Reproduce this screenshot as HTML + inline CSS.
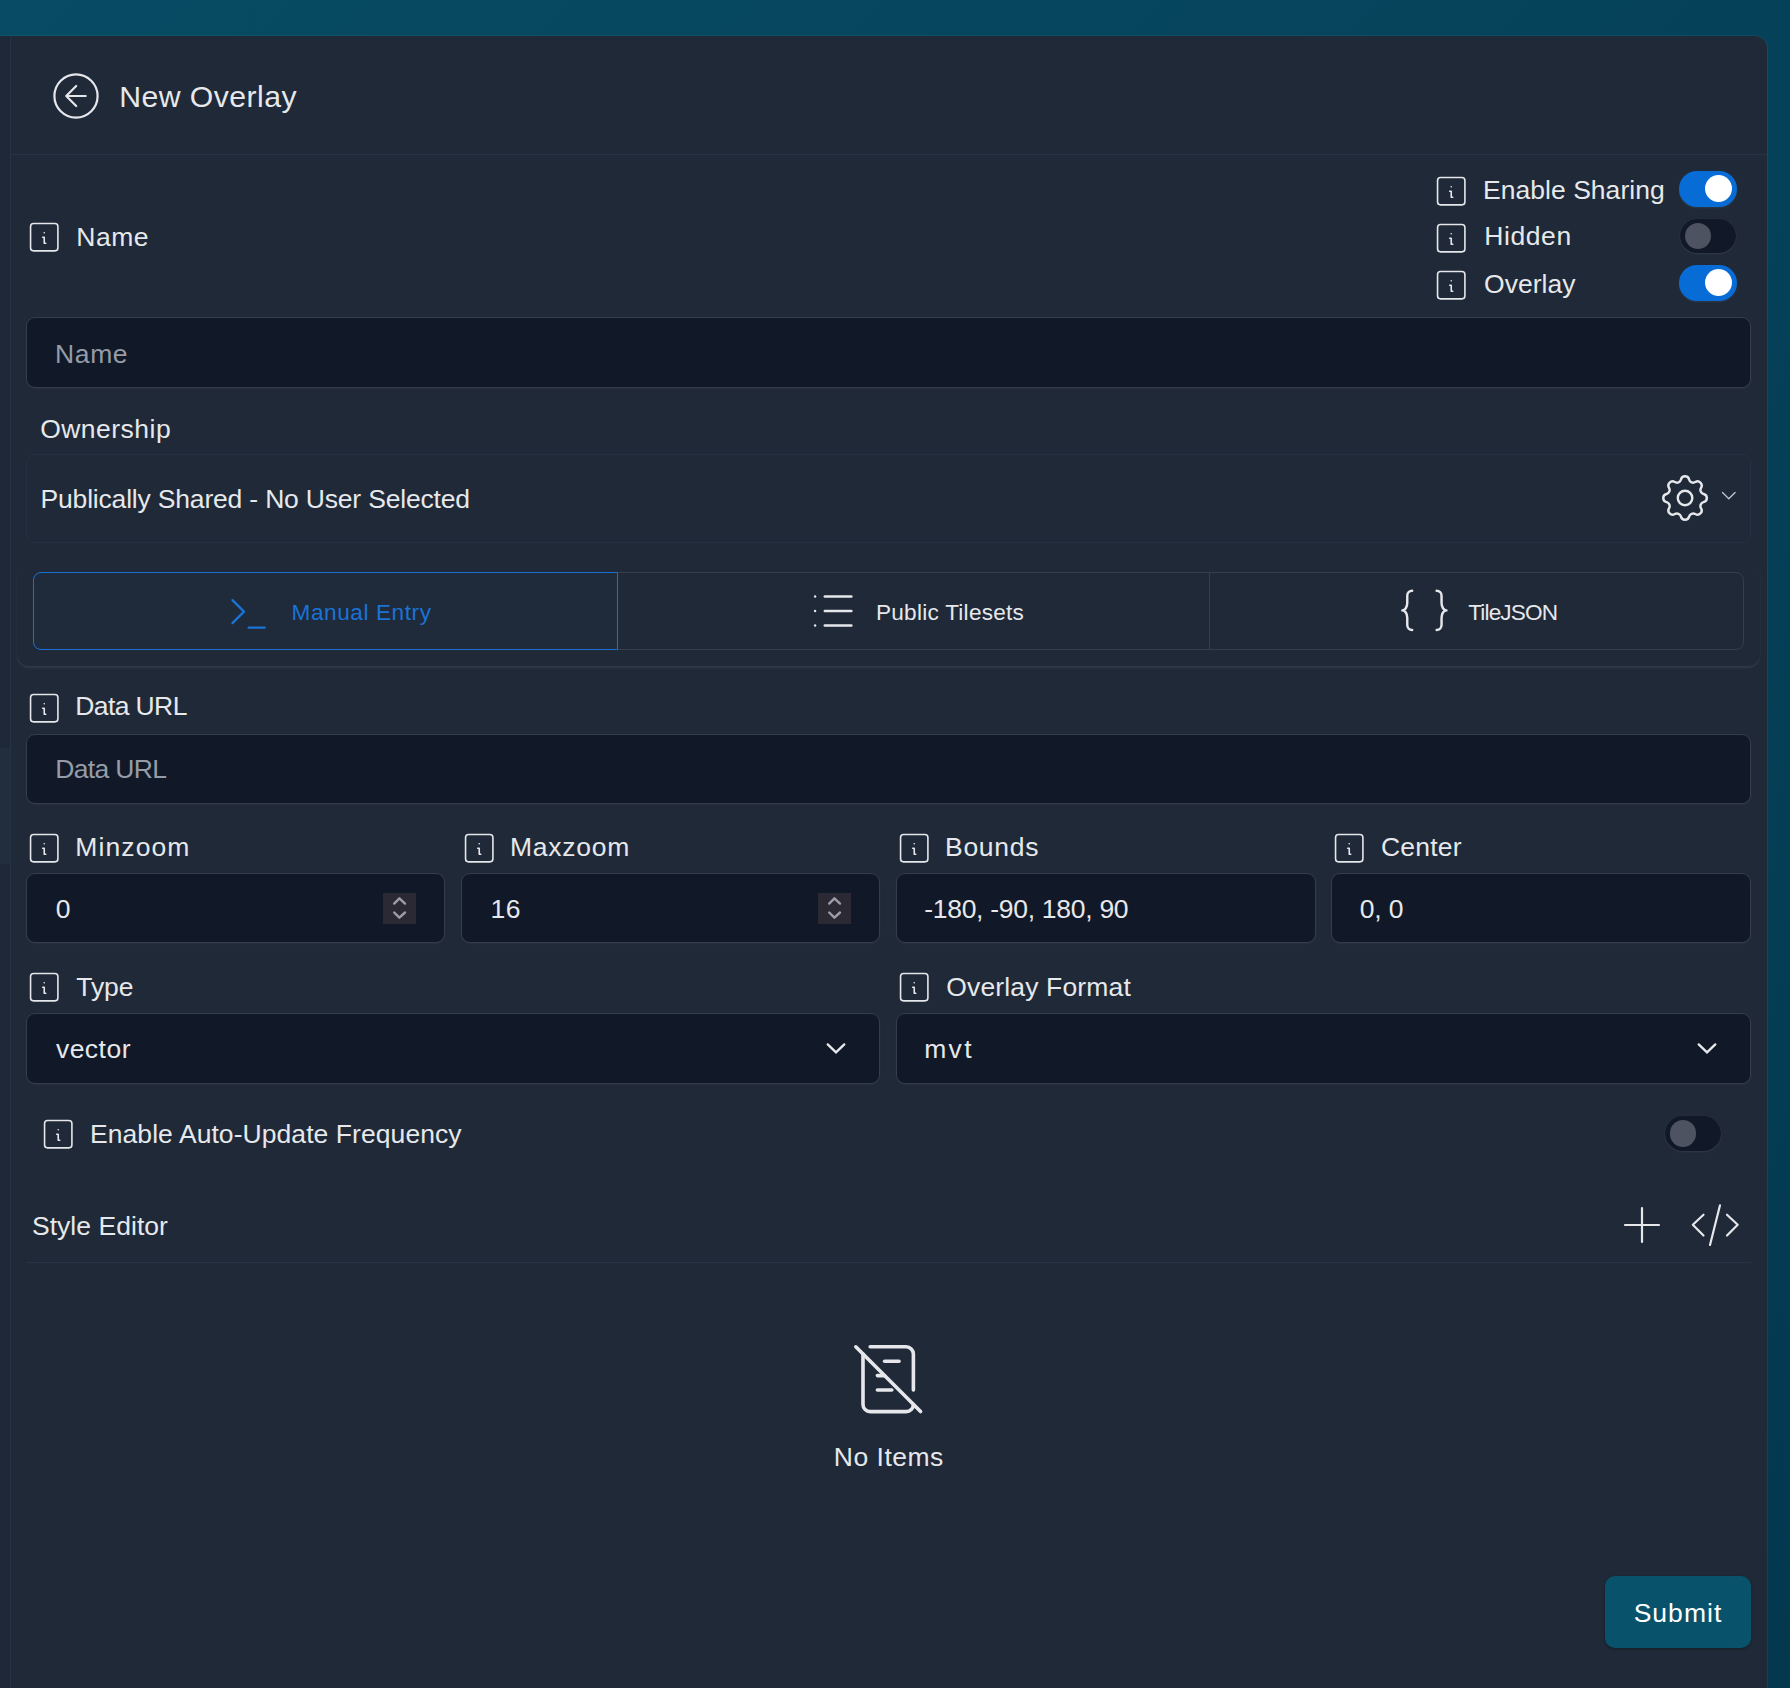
<!DOCTYPE html>
<html><head><meta charset="utf-8">
<style>
html,body{margin:0;padding:0;width:1790px;height:1688px;overflow:hidden;}
body{background:linear-gradient(to bottom right,#074c64,#03384f);position:relative;font-family:"Liberation Sans",sans-serif;}
.t{position:absolute;white-space:pre;}
.b{position:absolute;box-sizing:border-box;}
.i{position:absolute;overflow:visible;}

</style></head><body>
<div class="b" style="left:-20px;top:36px;width:1787px;height:1684px;background:#1f2937;border-radius:12px;box-shadow:0 0 0 0.6px rgba(200,210,225,0.10), 0 1px 4px rgba(200,210,225,0.05);"></div>
<div class="b" style="left:0px;top:36px;width:10px;height:1652px;background:#1f2836;"></div>
<div class="b" style="left:0px;top:748px;width:10px;height:116px;background:#222e3d;"></div>
<div class="b" style="left:10px;top:36px;width:1px;height:1652px;background:#243345;"></div>
<svg class="i" style="left:0;top:0;width:200px;height:200px" viewBox="0 0 200 200" fill="none" stroke="#e5e7eb" stroke-width="2.2" stroke-linecap="round" stroke-linejoin="round"><circle cx="76" cy="96" r="21.6"/><path d="M66.2 96h19.5M66.2 96l10 -10M66.2 96l10 10"/></svg>
<div class="t" id="t_title" style="left:119.29px;top:82.04px;font-size:30.2px;line-height:30.2px;color:#e6e8eb;letter-spacing:0.449px;font-weight:400;">New Overlay</div>
<div class="b" style="left:11px;top:154px;width:1756px;height:1px;background:#263344;"></div>
<svg class="i" style="left:25.96px;top:219.16px;width:36.48px;height:36.48px;" viewBox="0 0 24 24" fill="none" stroke="#e5e7eb" stroke-width="1.05" stroke-linecap="round" stroke-linejoin="round"><path d="M12 9h.01"/><path d="M3 5a2 2 0 0 1 2 -2h14a2 2 0 0 1 2 2v14a2 2 0 0 1 -2 2h-14a2 2 0 0 1 -2 -2v-14z"/><path d="M11 12h1v4h1"/></svg>
<div class="t" id="t_name_lbl" style="left:76.30px;top:223.57px;font-size:26.5px;line-height:26.5px;color:#e6e8eb;letter-spacing:0.498px;font-weight:400;">Name</div>
<svg class="i" style="left:1433.16px;top:173.16px;width:36.48px;height:36.48px;" viewBox="0 0 24 24" fill="none" stroke="#e5e7eb" stroke-width="1.05" stroke-linecap="round" stroke-linejoin="round"><path d="M12 9h.01"/><path d="M3 5a2 2 0 0 1 2 -2h14a2 2 0 0 1 2 2v14a2 2 0 0 1 -2 2h-14a2 2 0 0 1 -2 -2v-14z"/><path d="M11 12h1v4h1"/></svg>
<div class="t" id="t_share" style="left:1482.97px;top:176.57px;font-size:26.5px;line-height:26.5px;color:#e6e8eb;letter-spacing:0.040px;font-weight:400;">Enable Sharing</div>
<div class="b" style="left:1679px;top:171px;width:58px;height:36px;background:#086cd7;border-radius:18px;box-shadow:0 1px 2px rgba(200,210,225,0.10);"></div>
<div class="b" style="left:1705px;top:175.4px;width:27px;height:27.0px;background:#ffffff;border-radius:50%;"></div>
<svg class="i" style="left:1433.16px;top:220.16px;width:36.48px;height:36.48px;" viewBox="0 0 24 24" fill="none" stroke="#e5e7eb" stroke-width="1.05" stroke-linecap="round" stroke-linejoin="round"><path d="M12 9h.01"/><path d="M3 5a2 2 0 0 1 2 -2h14a2 2 0 0 1 2 2v14a2 2 0 0 1 -2 2h-14a2 2 0 0 1 -2 -2v-14z"/><path d="M11 12h1v4h1"/></svg>
<div class="t" id="t_hidden" style="left:1484.30px;top:223.37px;font-size:26.5px;line-height:26.5px;color:#e6e8eb;letter-spacing:0.570px;font-weight:400;">Hidden</div>
<div class="b" style="left:1680px;top:219px;width:56px;height:34px;background:#111827;border-radius:18px;box-shadow:0 0 1px rgba(200,210,225,0.15), 0 1px 2px rgba(200,210,225,0.10);"></div>
<div class="b" style="left:1685px;top:223px;width:26px;height:26px;background:#4d5360;border-radius:50%;"></div>
<svg class="i" style="left:1433.16px;top:267.16px;width:36.48px;height:36.48px;" viewBox="0 0 24 24" fill="none" stroke="#e5e7eb" stroke-width="1.05" stroke-linecap="round" stroke-linejoin="round"><path d="M12 9h.01"/><path d="M3 5a2 2 0 0 1 2 -2h14a2 2 0 0 1 2 2v14a2 2 0 0 1 -2 2h-14a2 2 0 0 1 -2 -2v-14z"/><path d="M11 12h1v4h1"/></svg>
<div class="t" id="t_overlay" style="left:1484.06px;top:270.77px;font-size:26.5px;line-height:26.5px;color:#e6e8eb;letter-spacing:0.033px;font-weight:400;">Overlay</div>
<div class="b" style="left:1679px;top:265px;width:58px;height:36px;background:#086cd7;border-radius:18px;box-shadow:0 1px 2px rgba(200,210,225,0.10);"></div>
<div class="b" style="left:1705px;top:269.4px;width:27px;height:27.0px;background:#ffffff;border-radius:50%;"></div>
<div class="b" style="left:26px;top:317px;width:1725px;height:70.5px;background:#111827;border:1px solid #343d4b;border-radius:9px;box-shadow:0 1px 2px rgba(130,140,160,0.10);"></div>
<div class="t" id="t_name_ph" style="left:54.97px;top:340.57px;font-size:26.5px;line-height:26.5px;color:#959ca8;letter-spacing:0.644px;font-weight:400;">Name</div>
<div class="t" id="t_own" style="left:40.14px;top:415.77px;font-size:26.5px;line-height:26.5px;color:#e6e8eb;letter-spacing:0.484px;font-weight:400;">Ownership</div>
<div class="b" style="left:26px;top:454px;width:1725px;height:89px;border:1px solid #243142;border-radius:9px;"></div>
<div class="t" id="t_pub" style="left:40.57px;top:485.67px;font-size:26.5px;line-height:26.5px;color:#e6e8eb;letter-spacing:-0.187px;font-weight:400;">Publically Shared - No User Selected</div>
<svg class="i" style="left:1655.96px;top:468.96px;width:58.08px;height:58.08px;" viewBox="0 0 24 24" fill="none" stroke="#e5e7eb" stroke-width="1" stroke-linecap="round" stroke-linejoin="round"><path d="M10.325 4.317c.426 -1.756 2.924 -1.756 3.35 0a1.724 1.724 0 0 0 2.573 1.066c1.543 -.94 3.31 .826 2.37 2.37a1.724 1.724 0 0 0 1.065 2.572c1.756 .426 1.756 2.924 0 3.35a1.724 1.724 0 0 0 -1.066 2.573c.94 1.543 -.826 3.31 -2.37 2.37a1.724 1.724 0 0 0 -2.572 1.065c-.426 1.756 -2.924 1.756 -3.35 0a1.724 1.724 0 0 0 -2.573 -1.066c-1.543 .94 -3.31 -.826 -2.37 -2.37a1.724 1.724 0 0 0 -1.065 -2.572c-1.756 -.426 -1.756 -2.924 0 -3.35a1.724 1.724 0 0 0 1.066 -2.573c-.94 -1.543 .826 -3.31 2.37 -2.37c1 .608 2.296 .07 2.572 -1.065z"/><path d="M9 12a3 3 0 1 0 6 0a3 3 0 0 0 -6 0"/></svg>
<svg class="i" style="left:1715px;top:485px;width:30px;height:20px" viewBox="0 0 30 20" fill="none" stroke="#c3c7cd" stroke-width="1.3" stroke-linecap="round" stroke-linejoin="round"><path d="M7.5 7.5l6.3 6.3l6.3 -6.3"/></svg>
<div class="b" style="left:17px;top:563px;width:1743px;height:103px;border-radius:12px;box-shadow:0 1.5px 2px rgba(200,210,225,0.10);"></div>
<div class="b" style="left:33px;top:572px;width:1711px;height:78px;border:1px solid #343e4d;border-radius:8px;"></div>
<div class="b" style="left:617px;top:572px;width:1px;height:78px;background:#343e4d;"></div>
<div class="b" style="left:1209px;top:572px;width:1px;height:78px;background:#343e4d;"></div>
<div class="b" style="left:33px;top:572px;width:585px;height:78px;border:1.2px solid #1b70d3;border-radius:8px 0 0 8px;background:#1f2a3a;"></div>
<svg class="i" style="left:221.00px;top:583.50px;width:55.20px;height:55.20px;" viewBox="0 0 24 24" fill="none" stroke="#1a73d6" stroke-width="1" stroke-linecap="round" stroke-linejoin="round"><path d="M5 7l5 5l-5 5"/><path d="M12 19l7 0"/></svg>
<div class="t" id="t_tab1" style="left:291.55px;top:601.87px;font-size:22.6px;line-height:22.6px;color:#1a73d6;letter-spacing:0.577px;font-weight:400;">Manual Entry</div>
<svg class="i" style="left:803.20px;top:582.10px;width:58.08px;height:58.08px;" viewBox="0 0 24 24" fill="none" stroke="#e5e7eb" stroke-width="1" stroke-linecap="round" stroke-linejoin="round"><path d="M9 6l11 0"/><path d="M9 12l11 0"/><path d="M9 18l11 0"/><path d="M5 6l0 .01"/><path d="M5 12l0 .01"/><path d="M5 18l0 .01"/></svg>
<div class="t" id="t_tab2" style="left:875.95px;top:602.07px;font-size:22.6px;line-height:22.6px;color:#e6e8eb;letter-spacing:0.255px;font-weight:400;">Public Tilesets</div>
<svg class="i" style="left:1394.90px;top:581.00px;width:58.80px;height:58.80px;" viewBox="0 0 24 24" fill="none" stroke="#e5e7eb" stroke-width="1" stroke-linecap="round" stroke-linejoin="round"><path d="M7 4a2 2 0 0 0 -2 2v3a2 3 0 0 1 -2 3a2 3 0 0 1 2 3v3a2 2 0 0 0 2 2"/><path d="M17 4a2 2 0 0 1 2 2v3a2 3 0 0 0 2 3a2 3 0 0 0 -2 3v3a2 2 0 0 1 -2 2"/></svg>
<div class="t" id="t_tab3" style="left:1468.27px;top:601.87px;font-size:22.6px;line-height:22.6px;color:#e6e8eb;letter-spacing:-0.866px;font-weight:400;">TileJSON</div>
<svg class="i" style="left:25.96px;top:690.16px;width:36.48px;height:36.48px;" viewBox="0 0 24 24" fill="none" stroke="#e5e7eb" stroke-width="1.05" stroke-linecap="round" stroke-linejoin="round"><path d="M12 9h.01"/><path d="M3 5a2 2 0 0 1 2 -2h14a2 2 0 0 1 2 2v14a2 2 0 0 1 -2 2h-14a2 2 0 0 1 -2 -2v-14z"/><path d="M11 12h1v4h1"/></svg>
<div class="t" id="t_url_lbl" style="left:75.29px;top:693.37px;font-size:26.5px;line-height:26.5px;color:#e6e8eb;letter-spacing:-0.608px;font-weight:400;">Data URL</div>
<div class="b" style="left:26px;top:734px;width:1725px;height:70px;background:#111827;border:1px solid #343d4b;border-radius:9px;box-shadow:0 1px 2px rgba(130,140,160,0.10);"></div>
<div class="t" id="t_url_ph" style="left:55.17px;top:756.37px;font-size:26.5px;line-height:26.5px;color:#959ca8;letter-spacing:-0.654px;font-weight:400;">Data URL</div>
<svg class="i" style="left:25.96px;top:830.16px;width:36.48px;height:36.48px;" viewBox="0 0 24 24" fill="none" stroke="#e5e7eb" stroke-width="1.05" stroke-linecap="round" stroke-linejoin="round"><path d="M12 9h.01"/><path d="M3 5a2 2 0 0 1 2 -2h14a2 2 0 0 1 2 2v14a2 2 0 0 1 -2 2h-14a2 2 0 0 1 -2 -2v-14z"/><path d="M11 12h1v4h1"/></svg>
<div class="t" id="t_minz" style="left:75.29px;top:833.57px;font-size:26.5px;line-height:26.5px;color:#e6e8eb;letter-spacing:1.110px;font-weight:400;">Minzoom</div>
<div class="b" style="left:26px;top:873px;width:419px;height:70px;background:#111827;border:1px solid #343d4b;border-radius:9px;box-shadow:0 1px 2px rgba(130,140,160,0.10);"></div>
<div class="t" id="t_v0" style="left:55.82px;top:896.37px;font-size:26.5px;line-height:26.5px;color:#e6e8eb;letter-spacing:0.000px;font-weight:400;">0</div>
<div class="b" style="left:383px;top:893px;width:32.80000000000001px;height:31px;background:#2a2934;"></div>
<svg class="i" style="left:383px;top:893px;width:33px;height:31px" viewBox="0 0 33 31" fill="none" stroke="#9c9caa" stroke-width="2.4" stroke-linecap="round" stroke-linejoin="round"><path d="M11.2 10.6l5.2 -5.3l5.6 5.3"/><path d="M11.2 19.5l5.2 5.2l5.6 -5.2"/></svg>
<svg class="i" style="left:460.96px;top:830.16px;width:36.48px;height:36.48px;" viewBox="0 0 24 24" fill="none" stroke="#e5e7eb" stroke-width="1.05" stroke-linecap="round" stroke-linejoin="round"><path d="M12 9h.01"/><path d="M3 5a2 2 0 0 1 2 -2h14a2 2 0 0 1 2 2v14a2 2 0 0 1 -2 2h-14a2 2 0 0 1 -2 -2v-14z"/><path d="M11 12h1v4h1"/></svg>
<div class="t" id="t_maxz" style="left:509.97px;top:833.57px;font-size:26.5px;line-height:26.5px;color:#e6e8eb;letter-spacing:0.735px;font-weight:400;">Maxzoom</div>
<div class="b" style="left:461px;top:873px;width:419px;height:70px;background:#111827;border:1px solid #343d4b;border-radius:9px;box-shadow:0 1px 2px rgba(130,140,160,0.10);"></div>
<div class="t" id="t_v16" style="left:490.61px;top:896.37px;font-size:26.5px;line-height:26.5px;color:#e6e8eb;letter-spacing:0.420px;font-weight:400;">16</div>
<div class="b" style="left:818px;top:893px;width:32.799999999999955px;height:31px;background:#2a2934;"></div>
<svg class="i" style="left:818px;top:893px;width:33px;height:31px" viewBox="0 0 33 31" fill="none" stroke="#9c9caa" stroke-width="2.4" stroke-linecap="round" stroke-linejoin="round"><path d="M11.2 10.6l5.2 -5.3l5.6 5.3"/><path d="M11.2 19.5l5.2 5.2l5.6 -5.2"/></svg>
<svg class="i" style="left:895.96px;top:830.16px;width:36.48px;height:36.48px;" viewBox="0 0 24 24" fill="none" stroke="#e5e7eb" stroke-width="1.05" stroke-linecap="round" stroke-linejoin="round"><path d="M12 9h.01"/><path d="M3 5a2 2 0 0 1 2 -2h14a2 2 0 0 1 2 2v14a2 2 0 0 1 -2 2h-14a2 2 0 0 1 -2 -2v-14z"/><path d="M11 12h1v4h1"/></svg>
<div class="t" id="t_bounds" style="left:944.97px;top:833.57px;font-size:26.5px;line-height:26.5px;color:#e6e8eb;letter-spacing:0.731px;font-weight:400;">Bounds</div>
<div class="b" style="left:896px;top:873px;width:420px;height:70px;background:#111827;border:1px solid #343d4b;border-radius:9px;box-shadow:0 1px 2px rgba(130,140,160,0.10);"></div>
<div class="t" id="t_vb" style="left:924.22px;top:896.37px;font-size:26.5px;line-height:26.5px;color:#e6e8eb;letter-spacing:-0.285px;font-weight:400;">-180, -90, 180, 90</div>
<svg class="i" style="left:1330.96px;top:830.16px;width:36.48px;height:36.48px;" viewBox="0 0 24 24" fill="none" stroke="#e5e7eb" stroke-width="1.05" stroke-linecap="round" stroke-linejoin="round"><path d="M12 9h.01"/><path d="M3 5a2 2 0 0 1 2 -2h14a2 2 0 0 1 2 2v14a2 2 0 0 1 -2 2h-14a2 2 0 0 1 -2 -2v-14z"/><path d="M11 12h1v4h1"/></svg>
<div class="t" id="t_center" style="left:1380.96px;top:833.57px;font-size:26.5px;line-height:26.5px;color:#e6e8eb;letter-spacing:0.207px;font-weight:400;">Center</div>
<div class="b" style="left:1331px;top:873px;width:420px;height:70px;background:#111827;border:1px solid #343d4b;border-radius:9px;box-shadow:0 1px 2px rgba(130,140,160,0.10);"></div>
<div class="t" id="t_vc" style="left:1359.64px;top:896.37px;font-size:26.5px;line-height:26.5px;color:#e6e8eb;letter-spacing:-0.112px;font-weight:400;">0, 0</div>
<svg class="i" style="left:25.96px;top:969.16px;width:36.48px;height:36.48px;" viewBox="0 0 24 24" fill="none" stroke="#e5e7eb" stroke-width="1.05" stroke-linecap="round" stroke-linejoin="round"><path d="M12 9h.01"/><path d="M3 5a2 2 0 0 1 2 -2h14a2 2 0 0 1 2 2v14a2 2 0 0 1 -2 2h-14a2 2 0 0 1 -2 -2v-14z"/><path d="M11 12h1v4h1"/></svg>
<div class="t" id="t_type" style="left:76.32px;top:973.77px;font-size:26.5px;line-height:26.5px;color:#e6e8eb;letter-spacing:-0.098px;font-weight:400;">Type</div>
<div class="b" style="left:26px;top:1013px;width:854px;height:70.5px;background:#111827;border:1px solid #343d4b;border-radius:9px;box-shadow:0 1px 2px rgba(130,140,160,0.10);"></div>
<div class="t" id="t_vector" style="left:55.90px;top:1036.37px;font-size:26.5px;line-height:26.5px;color:#e6e8eb;letter-spacing:0.494px;font-weight:400;">vector</div>
<svg class="i" style="left:816.4px;top:1030px;width:40px;height:40px" viewBox="0 0 40 40" fill="none" stroke="#e8e9ec" stroke-width="2.3" stroke-linecap="round" stroke-linejoin="miter"><path d="M11.7 14.4l8.3 8l8.3 -8"/></svg>
<svg class="i" style="left:895.96px;top:969.16px;width:36.48px;height:36.48px;" viewBox="0 0 24 24" fill="none" stroke="#e5e7eb" stroke-width="1.05" stroke-linecap="round" stroke-linejoin="round"><path d="M12 9h.01"/><path d="M3 5a2 2 0 0 1 2 -2h14a2 2 0 0 1 2 2v14a2 2 0 0 1 -2 2h-14a2 2 0 0 1 -2 -2v-14z"/><path d="M11 12h1v4h1"/></svg>
<div class="t" id="t_fmt" style="left:946.29px;top:973.77px;font-size:26.5px;line-height:26.5px;color:#e6e8eb;letter-spacing:0.145px;font-weight:400;">Overlay Format</div>
<div class="b" style="left:896px;top:1013px;width:855px;height:70.5px;background:#111827;border:1px solid #343d4b;border-radius:9px;box-shadow:0 1px 2px rgba(130,140,160,0.10);"></div>
<div class="t" id="t_mvt" style="left:924.15px;top:1036.37px;font-size:26.5px;line-height:26.5px;color:#e6e8eb;letter-spacing:2.344px;font-weight:400;">mvt</div>
<svg class="i" style="left:1687.4px;top:1030px;width:40px;height:40px" viewBox="0 0 40 40" fill="none" stroke="#e8e9ec" stroke-width="2.3" stroke-linecap="round" stroke-linejoin="miter"><path d="M11.7 14.4l8.3 8l8.3 -8"/></svg>
<svg class="i" style="left:39.76px;top:1116.16px;width:36.48px;height:36.48px;" viewBox="0 0 24 24" fill="none" stroke="#e5e7eb" stroke-width="1.05" stroke-linecap="round" stroke-linejoin="round"><path d="M12 9h.01"/><path d="M3 5a2 2 0 0 1 2 -2h14a2 2 0 0 1 2 2v14a2 2 0 0 1 -2 2h-14a2 2 0 0 1 -2 -2v-14z"/><path d="M11 12h1v4h1"/></svg>
<div class="t" id="t_auto" style="left:90.00px;top:1121.17px;font-size:26.5px;line-height:26.5px;color:#e6e8eb;letter-spacing:0.067px;font-weight:400;">Enable Auto-Update Frequency</div>
<div class="b" style="left:1665px;top:1116px;width:56px;height:34.5px;background:#111827;border-radius:18px;box-shadow:0 0 1px rgba(200,210,225,0.15), 0 1px 2px rgba(200,210,225,0.10);"></div>
<div class="b" style="left:1670px;top:1120.2px;width:26.40000000000009px;height:26.399999999999864px;background:#4d5360;border-radius:50%;"></div>
<div class="t" id="t_style" style="left:31.94px;top:1212.77px;font-size:26.5px;line-height:26.5px;color:#e6e8eb;letter-spacing:0.042px;font-weight:400;">Style Editor</div>
<svg class="i" style="left:1600px;top:1180px;width:160px;height:90px" viewBox="0 0 160 90" fill="none" stroke="#e5e7eb" stroke-width="2.2" stroke-linecap="round" stroke-linejoin="round"><path d="M42 28v34M25 45h34"/><path d="M103.5 34.7l-10.7 10.1l10.7 10.7M127 34.7l10.7 10.1l-10.7 10.7M120 25.3l-10 39.6"/></svg>
<div class="b" style="left:26px;top:1262px;width:1725px;height:1px;background:#263344;"></div>
<svg class="i" style="left:845.40px;top:1335.80px;width:86.40px;height:86.40px;" viewBox="0 0 24 24" fill="none" stroke="#e5e7eb" stroke-width="1" stroke-linecap="round" stroke-linejoin="round"><path d="M7 3h10a2 2 0 0 1 2 2v10m0 4a2 2 0 0 1 -2 2h-10a2 2 0 0 1 -2 -2v-14"/><path d="M11 7h4"/><path d="M9 11h2"/><path d="M9 15h4"/><path d="M3 3l18 18"/></svg>
<div class="t" id="t_noitems" style="left:833.77px;top:1444.37px;font-size:26.5px;line-height:26.5px;color:#e6e8eb;letter-spacing:0.509px;font-weight:400;">No Items</div>
<div class="b" style="left:1605px;top:1576px;width:146px;height:72px;background:#08536b;border-radius:10px;box-shadow:0 1px 3px rgba(0,0,0,0.3);"></div>
<div class="t" id="t_submit" style="left:1633.65px;top:1600.17px;font-size:26.5px;line-height:26.5px;color:#ffffff;letter-spacing:1.033px;font-weight:400;">Submit</div>
</body></html>
